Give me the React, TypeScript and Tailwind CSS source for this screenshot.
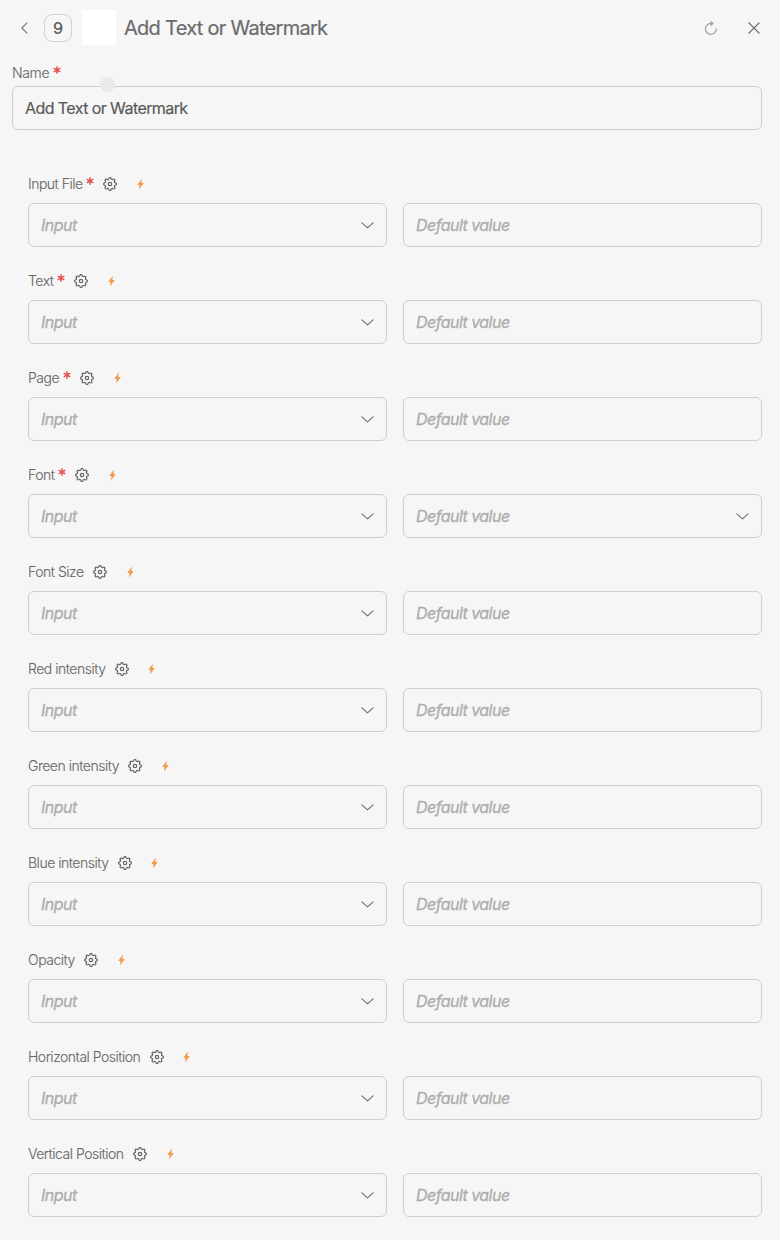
import React from "react";

type Field = { label: string; required?: boolean; select?: boolean };

const fields: Field[] = [
  { label: "Input File", required: true },
  { label: "Text", required: true },
  { label: "Page", required: true },
  { label: "Font", required: true, select: true },
  { label: "Font Size" },
  { label: "Red intensity" },
  { label: "Green intensity" },
  { label: "Blue intensity" },
  { label: "Opacity" },
  { label: "Horizontal Position" },
  { label: "Vertical Position" },
];

function Star() {
  return (
    <svg className="ml-[3.5px] mb-[6px] h-[8px] w-[8px] shrink-0" viewBox="0 0 8 8" stroke="#e5514c" strokeWidth="1.5" fill="none">
      <path d="M4 .3v7.4M.7 2.1l6.6 3.8M.7 5.9l6.6-3.8" />
    </svg>
  );
}

function Chevron() {
  return (
    <svg className="h-[7px] w-[13px] shrink-0" viewBox="0 0 13 7" fill="none" stroke="#6e6e6e" strokeWidth="1.1" strokeLinecap="round" strokeLinejoin="round">
      <path d="M.9.9l5.6 5 5.6-5" />
    </svg>
  );
}

function gearPath() {
  const pts: string[] = [];
  for (let i = 0; i < 96; i++) {
    const a = (i / 96) * Math.PI * 2;
    const c = Math.cos(a * 8);
    const r = 5.65 + 0.75 * Math.tanh(c * 2);
    pts.push(`${(7 + r * Math.sin(a)).toFixed(2)} ${(7 - r * Math.cos(a)).toFixed(2)}`);
  }
  return `M${pts.join("L")}Z`;
}
const gear = gearPath();

function Gear() {
  return (
    <svg className="ml-[9.3px] h-3.5 w-3.5 shrink-0" viewBox="0 0 14 14" fill="none" stroke="#666" strokeWidth="1.2" strokeLinejoin="round">
      <path d={gear} />
      <circle cx="7" cy="7" r="1.7" />
    </svg>
  );
}

function Bolt() {
  return (
    <svg className="ml-[19.7px] h-3 w-[7px] shrink-0" viewBox="0 0 7 12" fill="#f2994a">
      <path d="M4.9.4L.2 6.9h2.4L2 11.6l4.8-6.7H4.3z" />
    </svg>
  );
}

function Box({ text, select }: { text: string; select?: boolean }) {
  return (
    <div className="flex h-11 flex-1 items-center justify-between rounded-[6px] border border-[#cfcfcf] px-3 text-base text-[#adadad]">
      <span className="italic tracking-[-0.53px] [-webkit-text-stroke:0.3px_#adadad]">{text}</span>
      {select && <Chevron />}
    </div>
  );
}

export default function App() {
  return (
    <main className="h-[1240px] w-[780px] overflow-hidden bg-[#f6f6f6] pl-3 pr-[18px] font-['Inter',sans-serif] text-[#666]">
      <header className="flex h-14 items-center">
        <svg className="ml-[9px] h-3 w-[7px]" viewBox="0 0 7 12" fill="none" stroke="#737373" strokeWidth="1.1" strokeLinecap="round" strokeLinejoin="round">
          <path d="M6 .8L.8 6 6 11.2" />
        </svg>
        <div className="ml-4 flex h-7 w-7 items-center justify-center rounded-[8px] border border-[#d2d2d2] text-base font-medium text-[#5c5c5c]">9</div>
        <div className="mb-px ml-[10px] h-[35px] w-[34px] bg-white" />
        <h1 className="ml-2 whitespace-nowrap text-xl font-normal tracking-[-0.72px] text-[#6b6b6b] [-webkit-text-stroke:0.2px_#6b6b6b]">Add Text or Watermark</h1>
        <svg className="ml-auto h-[14px] w-[13px]" viewBox="0 0 13 14" fill="none" stroke="#a2a2a2" strokeWidth="1.3" strokeLinecap="round" strokeLinejoin="round">
          <path d="M12.2 7.8a5.4 5.4 0 1 1-5.4-5.3H9M7 .7L8.9 2.5 7 4.4" />
        </svg>
        <svg className="ml-[31px] mr-0.5 h-3 w-3" viewBox="0 0 12 12" fill="none" stroke="#666" strokeWidth="1.3" strokeLinecap="round">
          <path d="M.9.9l10.2 10.2M11.1.9L.9 11.1" />
        </svg>
      </header>

      <section className="relative pt-[7px]">
        <label className="flex h-5 items-center text-sm font-light tracking-[-0.35px]">
          <span className="[-webkit-text-stroke:0.1px_#666]">Name</span>
          <Star />
        </label>
        <div className="mt-[3px] flex h-11 items-center rounded-[6px] border border-[#cfcfcf] px-3 text-base text-[#5a5a5a]">
          <span className="tracking-[-0.58px] [-webkit-text-stroke:0.2px_#5a5a5a]">Add Text or Watermark</span>
        </div>
        <span className="absolute left-[88px] top-[21px] h-[15px] w-[15px] rounded-full bg-[#e9e9e9]" />
      </section>

      <section className="flex flex-col gap-6 pl-4 pt-11">
        {fields.map((f) => (
          <div key={f.label}>
            <div className="flex h-5 items-center text-sm font-light">
              <span className="whitespace-nowrap tracking-[-0.49px] [-webkit-text-stroke:0.1px_#666]">{f.label}</span>
              {f.required && <Star />}
              <Gear />
              <Bolt />
            </div>
            <div className="mt-[9px] flex gap-4">
              <Box text="Input" select />
              <Box text="Default value" select={f.select} />
            </div>
          </div>
        ))}
      </section>
    </main>
  );
}
